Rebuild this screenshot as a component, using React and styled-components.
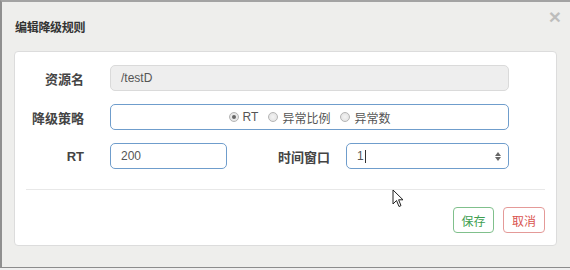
import React from 'react';
import styled, { createGlobalStyle } from 'styled-components';

const GlobalStyle = createGlobalStyle`
  html, body {
    margin: 0;
    padding: 0;
    background: #efefef;
  }
  body {
    font-family: "Liberation Sans", "Noto Sans CJK SC", sans-serif;
    color: #333;
  }
`;

const Modal = styled.div`
  position: relative;
  box-sizing: border-box;
  width: 570px;
  height: 268px;
  background: #eeeeec;
  border-top: 2px solid #a3a3a3;
  border-left: 2px solid #8f8f8f;
  border-bottom: 1px solid #8c8c8c;
`;

const Header = styled.div`
  height: 49px;
  display: flex;
  align-items: center;
  justify-content: space-between;
  padding: 0 9px 0 13px;
`;

const Title = styled.h4`
  margin: 0 0 1px;
  font-size: 12px;
  font-weight: bold;
  color: #333;
  letter-spacing: -0.3px;
`;

const Close = styled.span`
  align-self: flex-start;
  margin-top: 4px;
  font-size: 21px;
  line-height: 1;
  font-weight: bold;
  color: #000;
  opacity: 0.2;
`;

const Card = styled.div`
  margin: 0 13px 0 12px;
  background: #fff;
  border: 1px solid #dcdcdc;
  border-radius: 4px;
  padding: 13px 11px 12px;
`;

const Form = styled.div`
  display: flex;
  flex-direction: column;
  gap: 13px;
  padding-right: 36px;
`;

const Row = styled.div`
  display: grid;
  grid-template-columns: 58px 1fr;
  column-gap: 26px;
  align-items: center;
`;

const Label = styled.label`
  text-align: right;
  font-size: 13px;
  font-weight: bold;
  color: #444;
`;

const Field = styled.div`
  box-sizing: border-box;
  height: 26px;
  display: flex;
  align-items: center;
  padding: 0 10px;
  font-size: 12px;
  color: #555;
  border-radius: 5px;
  border: 1px solid ${(p) => (p.$disabled ? '#dadada' : '#6f9dcc')};
  background: ${(p) => (p.$disabled ? '#eeeeee' : '#fff')};
  ${(p) => p.$width && `width: ${p.$width}px; flex: none;`}
  ${(p) => p.$grow && 'flex: 1;'}
  ${(p) => p.$center && 'justify-content: center;'}
`;

const Split = styled.div`
  display: flex;
  align-items: center;
`;

const SideLabel = styled(Label)`
  box-sizing: border-box;
  flex: none;
  width: 119px;
  padding-right: 16px;
`;

const Caret = styled.span`
  display: inline-block;
  width: 1px;
  height: 13px;
  margin-left: 1px;
  background: #333;
`;

const Spinner = styled.span`
  margin-left: auto;
  margin-right: -3px;
  display: flex;
  flex-direction: column;
  gap: 1px;
`;

const Radios = styled.div`
  display: flex;
  align-items: center;
  gap: 10px;
`;

const Option = styled.span`
  display: inline-flex;
  align-items: center;
  gap: 4px;
  color: #555;
  font-size: 12px;
`;

const Dot = styled.span`
  box-sizing: border-box;
  width: 10px;
  height: 10px;
  border-radius: 50%;
  border: 1px solid #b5b5b5;
  background: radial-gradient(circle, #f4f4f4 0%, #dedede 100%);
  display: flex;
  align-items: center;
  justify-content: center;
  &::after {
    content: '';
    width: 4px;
    height: 4px;
    border-radius: 50%;
    background: ${(p) => (p.$checked ? '#666' : 'transparent')};
  }
`;

const Divider = styled.hr`
  margin: 20px 0 17px;
  border: 0;
  border-top: 1px solid #e8e8e8;
`;

const Footer = styled.div`
  display: flex;
  justify-content: flex-end;
  gap: 9px;
`;

const Button = styled.button`
  box-sizing: border-box;
  height: 26px;
  width: ${(p) => p.$w}px;
  padding: 0;
  font-family: inherit;
  font-size: 12px;
  background: #fff;
  border-radius: 4px;
  color: ${(p) => (p.$danger ? '#d9534f' : '#3e9e4f')};
  border: 1px solid ${(p) => (p.$danger ? '#e49a98' : '#80c08c')};
`;

const Pointer = styled.svg`
  position: absolute;
  left: 390px;
  top: 187px;
`;

const Arrows = () => (
  <Spinner>
    <svg width="6" height="4" viewBox="0 0 6 4">
      <path d="M0 4 L3 0 L6 4 Z" fill="#666" />
    </svg>
    <svg width="6" height="4" viewBox="0 0 6 4">
      <path d="M0 0 L3 4 L6 0 Z" fill="#666" />
    </svg>
  </Spinner>
);

export default function App() {
  return (
    <>
      <GlobalStyle />
      <Modal>
        <Header>
          <Title>编辑降级规则</Title>
          <Close>×</Close>
        </Header>
        <Card>
          <Form>
            <Row>
              <Label>资源名</Label>
              <Field $disabled>/testD</Field>
            </Row>
            <Row>
              <Label>降级策略</Label>
              <Field $center>
                <Radios>
                  <Option>
                    <Dot $checked />
                    RT
                  </Option>
                  <Option>
                    <Dot />
                    异常比例
                  </Option>
                  <Option>
                    <Dot />
                    异常数
                  </Option>
                </Radios>
              </Field>
            </Row>
            <Row>
              <Label>RT</Label>
              <Split>
                <Field $width={117}>200</Field>
                <SideLabel>时间窗口</SideLabel>
                <Field $grow>
                  1<Caret />
                  <Arrows />
                </Field>
              </Split>
            </Row>
          </Form>
          <Divider />
          <Footer>
            <Button $w={41}>保存</Button>
            <Button $w={42} $danger>
              取消
            </Button>
          </Footer>
        </Card>
        <Pointer width="12" height="19" viewBox="0 0 12 19">
          <path
            d="M1 1 L1 15 L4.5 11.5 L7 17.5 L9 16.6 L6.6 10.8 L11 10.8 Z"
            fill="#fff"
            stroke="#222"
            strokeWidth="1"
            strokeLinejoin="round"
          />
        </Pointer>
      </Modal>
    </>
  );
}
